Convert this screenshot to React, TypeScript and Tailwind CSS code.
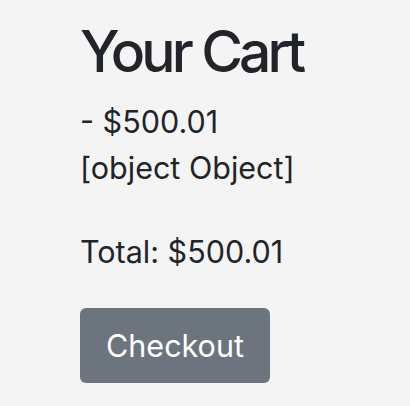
export default function App() {
  const items = [{ name: "", price: 500.01 }]
  const total = items.reduce((s, i) => s + i.price, 0)

  return (
    <div className="min-h-[406px] w-full bg-[#f4f4f4] font-['Inter','Liberation_Sans',sans-serif] text-[#212529]">
      <div className="px-[80px] pt-[18px]">
        <h1 className="text-[57px] font-medium leading-[1.2] tracking-[-3.9px] mb-[13px]">Your Cart</h1>
        <div className="text-[30.5px] leading-[46px]">
          {items.map((item, i) => (
            <div key={i}>
              {item.name} - ${item.price.toFixed(2)}
            </div>
          ))}
          <div>[object Object]</div>
        </div>
        <p className="mt-[38px] text-[30.5px] leading-[45px]">Total: ${total.toFixed(2)}</p>
        <button className="mt-[34px] h-[75px] w-[190px] rounded-[6px] bg-[#6c757d] text-[30.5px] text-white">
          Checkout
        </button>
      </div>
    </div>
  )
}
